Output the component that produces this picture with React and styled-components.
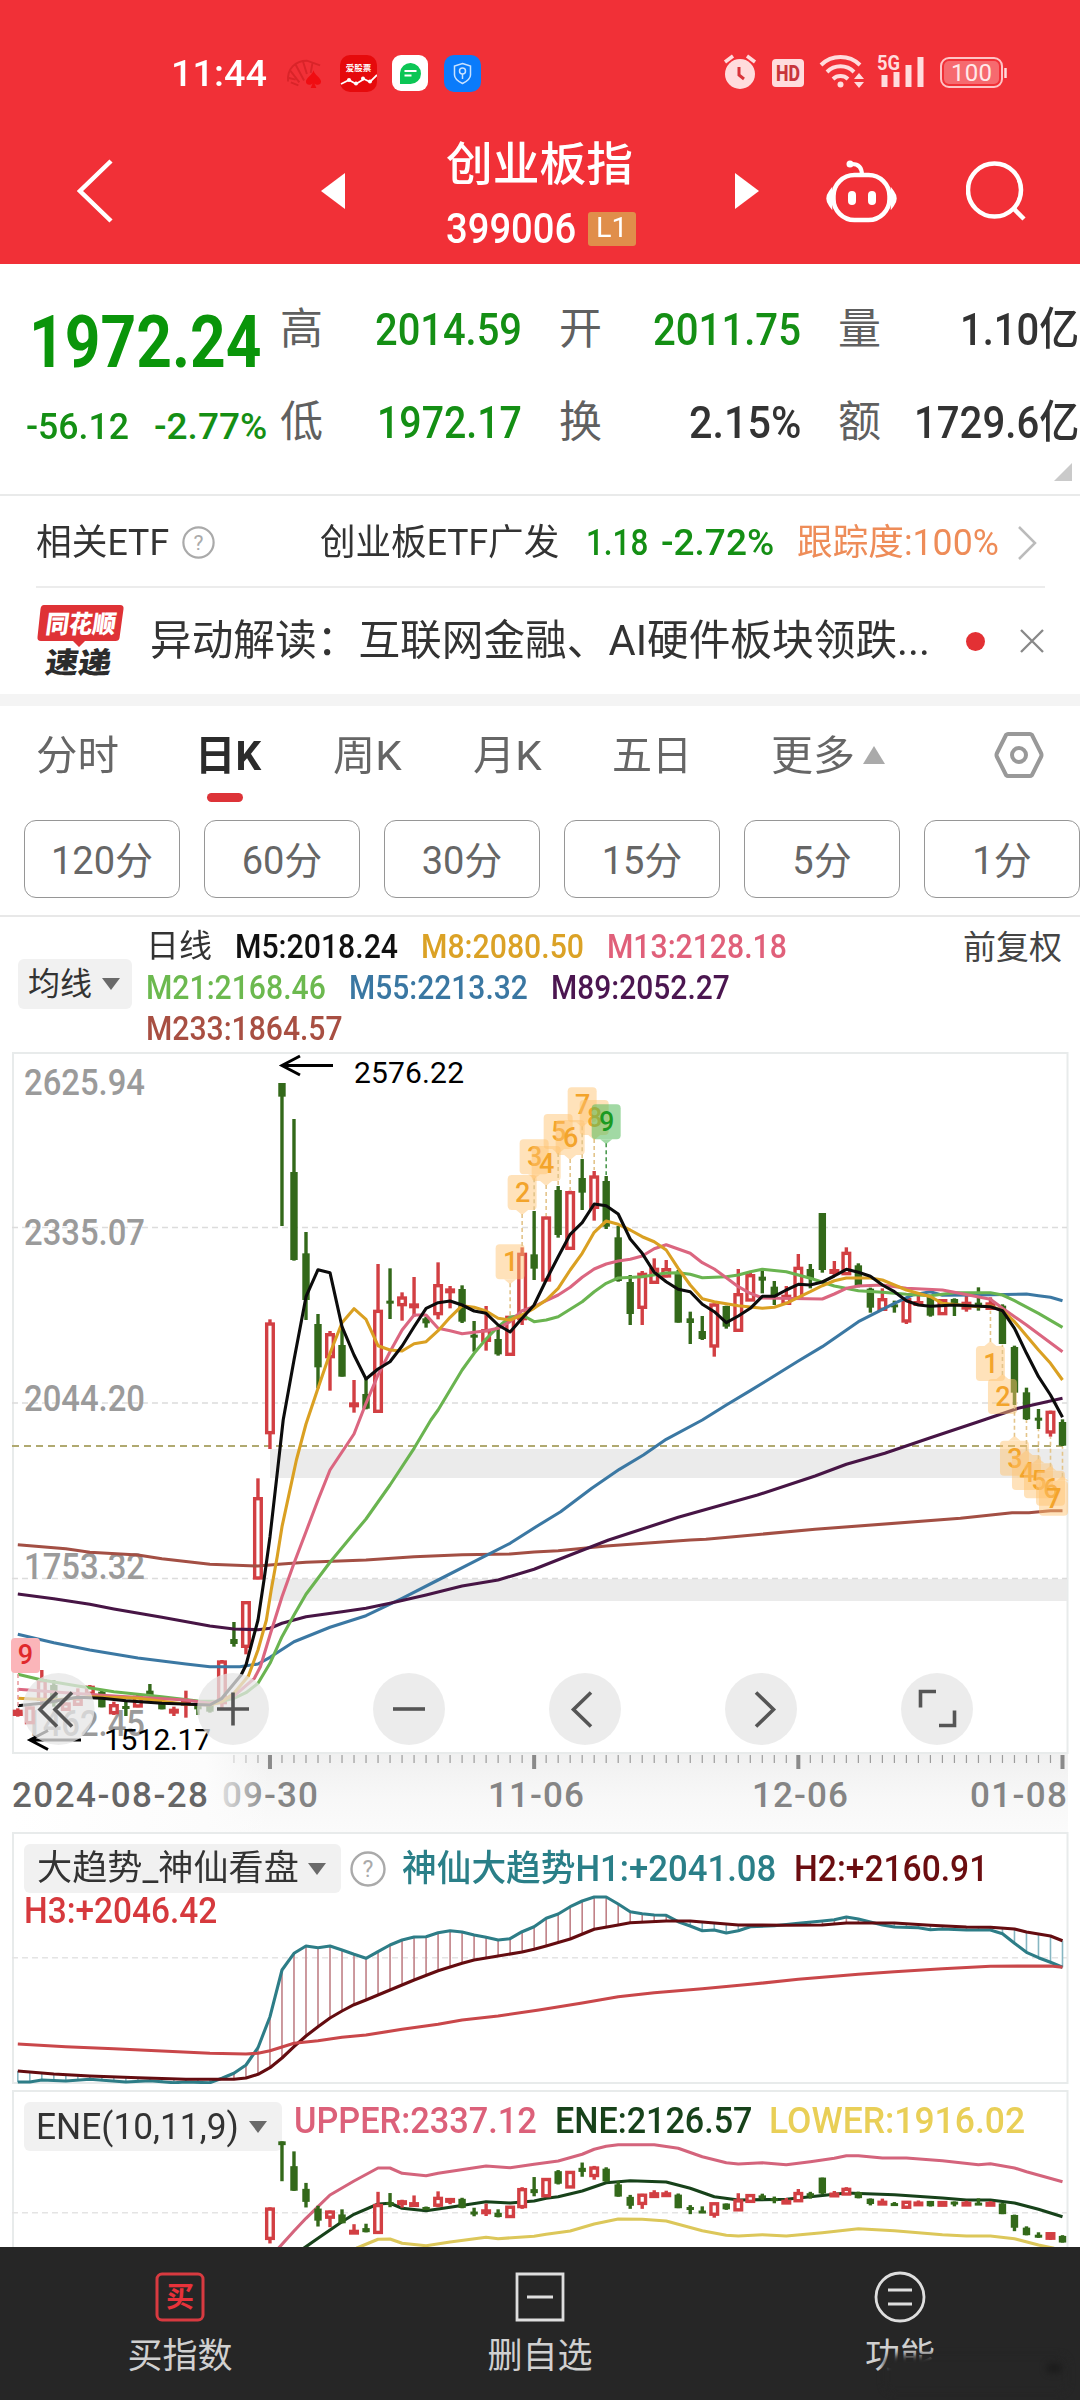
import React, { useLayoutEffect, useRef, useState } from "react";
import styled, { createGlobalStyle } from "styled-components";

const GlobalStyle = createGlobalStyle`
  * {
    box-sizing: border-box;
  }
  body {
    margin: 0;
    background: #fff;
    font-family: Roboto, "Noto Sans CJK SC", sans-serif;
    line-height: 1;
    color: #333;
  }
  svg {
    display: block;
    flex: none;
    font-family: Roboto, "Noto Sans CJK SC", sans-serif;
  }
`;

/* ---------- fitted text ---------- */

const FitOuter = styled.span`
  display: inline-block;
  flex: none;
  width: ${({ $w }) => $w}px;
  font-size: ${({ $size }) => $size}px;
  font-weight: ${({ $weight }) => $weight};
  color: ${({ $color }) => $color};
  white-space: nowrap;
  line-height: 1;
`;
const FitInner = styled.span`
  display: inline-block;
  transform-origin: left center;
`;

// squeezes the text to an exact width, like the condensed DIN digits do
function Fit({ w, size, weight = 400, color = "inherit", children }) {
  const ref = useRef(null);
  const [scale, setScale] = useState(1);
  useLayoutEffect(() => {
    if (ref.current) setScale(w / ref.current.offsetWidth);
  }, [w, size, children]);
  return (
    <FitOuter $w={w} $size={size} $weight={weight} $color={color}>
      <FitInner ref={ref} style={{ transform: `scaleX(${scale})` }}>
        {children}
      </FitInner>
    </FitOuter>
  );
}

/* ---------- layout ---------- */

const Page = styled.div`
  width: 1080px;
  height: 2400px;
  overflow: hidden;
  display: flex;
  flex-direction: column;
  background: #fff;
`;
const Header = styled.header`
  height: 264px;
  background: #f13037;
  color: #fff;
`;
const StatusBar = styled.div`
  height: 118px;
  padding: 28px 72px 0 171px;
  display: flex;
  align-items: center;
  justify-content: space-between;
`;
const StatusGroup = styled.div`
  display: flex;
  align-items: center;
`;
const AppIcons = styled.div`
  display: flex;
  align-items: center;
  gap: 15.5px;
  margin-left: 19px;
`;
const TitleBar = styled.div`
  height: 146px;
  display: grid;
  grid-template-columns: 321px 125px 289px 91px 140px 114px;
  align-items: center;
  justify-items: start;
  > svg:first-child {
    margin-left: 77px;
  }
`;
const TitleBlock = styled.div`
  padding-top: 8px;
  display: flex;
  flex-direction: column;
  gap: 21px;
`;
const CodeLine = styled.div`
  display: flex;
  align-items: center;
  gap: 12px;
`;
const LevelBadge = styled.span`
  width: 48px;
  height: 34px;
  border-radius: 3px;
  background: #e08e4b;
  display: flex;
  justify-content: center;
  align-items: center;
`;

const Quote = styled.section`
  height: 232px;
  border-bottom: 2px solid #e9eaea;
  display: grid;
  grid-template-columns: 280px 1fr;
`;
const PriceBlock = styled.div`
  padding: 42px 0 0 24px;
  display: flex;
  flex-direction: column;
  gap: 29px;
  > span {
    margin-left: 5px;
  }
`;
const Changes = styled.div`
  display: flex;
  gap: 25px;
  margin-left: 2px;
`;
const Stats = styled.div`
  position: relative;
  padding-top: 19px;
  display: grid;
  grid-template-columns: 242px 242px 241px;
  grid-auto-rows: 93px;
  column-gap: 37px;
`;
const Stat = styled.div`
  display: flex;
  align-items: center;
  justify-content: space-between;
  font-size: 43px;
  color: #606060;
`;
const Corner = styled.i`
  position: absolute;
  right: 8px;
  bottom: 13px;
  border-left: 18px solid transparent;
  border-bottom: 18px solid #cacaca;
`;

const EtfRow = styled.div`
  margin: 0 35px 0 36px;
  height: 92px;
  padding-top: 3px;
  border-bottom: 2px solid #ececec;
  display: flex;
  align-items: center;
`;
const Spacer = styled.span`
  flex: none;
  width: ${({ $w }) => $w}px;
`;
const NewsRow = styled.div`
  height: 106px;
  padding: 0 36px;
  display: flex;
  align-items: center;
`;
const Dot = styled.span`
  flex: none;
  width: 19px;
  height: 19px;
  border-radius: 50%;
  background: #e33034;
  margin: 0 35px 0 36px;
`;
const Band = styled.div`
  height: 12px;
  background: #f4f4f4;
`;
const Tabs = styled.nav`
  height: 114px;
  padding: 24px 36px 0;
  display: flex;
  align-items: flex-start;
`;
const Tab = styled.div`
  height: 74px;
  width: ${({ $w }) => $w}px;
  display: flex;
  flex-direction: column;
  color: ${({ $active }) => ($active ? "#2b2b2b" : "#666")};
  padding-top: 6px;
  &::after {
    content: "";
    width: 36px;
    height: 9px;
    border-radius: 5px;
    margin: 16px 0 0 12px;
    background: ${({ $active }) => ($active ? "#dd3338" : "transparent")};
  }
`;
const MoreArrow = styled.i`
  margin: 16px 109px 0 8px;
  border: 11px solid transparent;
  border-top: 0;
  border-bottom: 18px solid #aaa;
`;
const Periods = styled.div`
  height: 97px;
  padding-left: 24px;
  display: flex;
  gap: 24px;
  border-bottom: 2px solid #e8e8e8;
`;
const Period = styled.button`
  flex: none;
  width: 156px;
  height: 78px;
  padding: 0 0 3px;
  border: 1.5px solid #969696;
  border-radius: 12px;
  background: #fff;
  color: #666;
  font: 400 38px Roboto, "Noto Sans CJK SC", sans-serif;
`;

const Legend = styled.div`
  height: 135px;
  display: grid;
  grid-template-columns: 129px 834px 1fr;
`;
const Picker = styled.button`
  display: flex;
  align-items: center;
  gap: 10px;
  border: 0;
  padding: 0 0 0 ${({ $pad }) => $pad}px;
  width: ${({ $w }) => $w}px;
  height: ${({ $h }) => $h}px;
  margin: ${({ $m }) => $m};
  border-radius: 6px;
  background: #f1f1f1;
  color: #333;
  font-family: inherit;
  &::after {
    content: "";
    border: 9px solid transparent;
    border-bottom: 0;
    border-top: 12px solid #6a6a6a;
  }
`;
const LegendLines = styled.div`
  padding: 13px 0 0 17px;
  display: flex;
  flex-direction: column;
  gap: 7px;
`;
const LegendLine = styled.div`
  display: flex;
  gap: 23px;
  height: 34px;
`;
const Adjust = styled.div`
  padding-top: 14px;
`;

// chart and its header share one grid cell
const Panel = styled.section`
  flex: none;
  display: grid;
  height: ${({ $h }) => $h}px;
  margin-bottom: ${({ $gap }) => $gap || 0}px;
  > * {
    grid-area: 1 / 1;
  }
`;
const PlotSvg = styled.svg`
  overflow: visible;
`;
const PanelHead = styled.div`
  display: flex;
  flex-wrap: wrap;
  align-content: flex-start;
  align-items: center;
  padding-top: ${({ $top }) => $top || 0}px;
`;
const BottomNav = styled.nav`
  position: relative;
  height: 153px;
  background: #262626;
  display: grid;
  grid-template-columns: repeat(3, 360px);
`;
const NavItem = styled.div`
  display: flex;
  flex-direction: column;
  align-items: center;
  padding: 24px 0 0;
  gap: 16px;
  font-size: 35px;
  color: #d0d0d0;
`;
const Smudge = styled.div`
  position: absolute;
  left: ${({ $x }) => $x}px;
  top: ${({ $y }) => $y}px;
  width: ${({ $w }) => $w}px;
  height: ${({ $h }) => $h}px;
  background: ${({ $c }) => $c || "#262626"};
  border-radius: 10px;
  filter: blur(3px);
`;

/* ---------- chart data ---------- */

// x of bar i; y values are kept in thirds of a pixel below each chart's base
const X = (i) => 17.8 + 12.008 * i;

// [up, high, top, bottom, low]
const CANDLES = [
  [1, 2005, 2012, 2025, 2030], [1, 2000, 2002, 2050, 2050], [1, 1890, 1920, 1980, 2005],
  [0, 1920, 1935, 1990, 2000], [1, 1988, 1990, 2010, 2010], [1, 1945, 1975, 1995, 1997],
  [1, 1935, 1940, 1962, 1965], [0, 1953, 1955, 2002, 2002], [1, 1985, 1995, 2020, 2025],
  [0, 1985, 1998, 2006, 2028], [1, 1960, 1970, 2000, 2002], [0, 1932, 1952, 1965, 1968],
  [0, 1990, 1990, 2008, 2008], [1, 2000, 2009, 2017, 2028], [1, 1952, 1985, 1992, 2033],
  [0, 1995, 1995, 2008, 2025], [0, 1993, 1995, 2015, 2018], [1, 1860, 1864, 1990, 2005],
  [0, 1746, 1797, 1812, 1820], [1, 1684, 1686, 1821, 1843], [1, 1315, 1374, 1616, 1618],
  [1, 838, 850, 1180, 1227], [0, 129, 129, 170, 558], [0, 237, 396, 660, 662],
  [0, 576, 640, 780, 840], [0, 822, 852, 982, 1045], [1, 873, 882, 952, 1052],
  [0, 860, 915, 1010, 1010], [1, 1020, 1090, 1098, 1118], [0, 1015, 1062, 1106, 1108],
  [1, 672, 812, 1116, 1118], [0, 685, 782, 790, 837], [1, 757, 772, 796, 842],
  [1, 711, 793, 801, 830], [0, 830, 835, 850, 863], [1, 667, 735, 823, 838],
  [1, 738, 748, 756, 805], [0, 736, 747, 845, 849], [0, 843, 884, 892, 935],
  [1, 798, 870, 903, 932], [0, 860, 897, 943, 947], [1, 828, 830, 945, 946],
  [1, 622, 641, 838, 855], [0, 513, 643, 686, 720], [1, 530, 532, 722, 723],
  [0, 438, 450, 585, 593], [1, 452, 456, 627, 628], [0, 357, 414, 458, 510],
  [1, 393, 409, 504, 542], [0, 408, 423, 560, 567], [0, 558, 592, 723, 725],
  [0, 705, 726, 822, 855], [1, 693, 701, 804, 855], [1, 655, 686, 729, 731],
  [1, 660, 687, 710, 712], [0, 690, 702, 848, 848], [0, 815, 835, 849, 912],
  [0, 828, 873, 897, 900], [1, 790, 793, 920, 950], [0, 797, 798, 860, 866],
  [1, 687, 762, 873, 875], [1, 697, 705, 782, 783], [0, 692, 710, 722, 760],
  [0, 723, 740, 770, 795], [1, 738, 767, 792, 795], [1, 642, 683, 775, 777],
  [0, 672, 687, 715, 745], [0, 519, 519, 690, 698], [1, 663, 690, 698, 706],
  [1, 622, 638, 703, 705], [0, 670, 676, 740, 742], [0, 743, 746, 803, 818],
  [1, 745, 777, 810, 812], [0, 782, 793, 801, 818], [1, 775, 777, 845, 852],
  [1, 765, 786, 795, 797], [0, 770, 770, 827, 830], [1, 778, 780, 823, 825],
  [0, 775, 777, 795, 828], [1, 768, 788, 806, 815], [0, 742, 788, 796, 812],
  [1, 772, 790, 807, 810], [0, 793, 797, 912, 912], [0, 917, 921, 1058, 1095],
  [0, 1043, 1057, 1138, 1140], [0, 1107, 1133, 1142, 1167], [1, 1112, 1115, 1178, 1190],
  [0, 1138, 1146, 1217, 1218],
];

const MA_LINES = [
  ["#a34f44", [0,1514,4,1526,6,1537,10,1545,12,1556,16,1573,20,1578,22,1572,24,1567,29,1560,33,1550,37,1544,41,1542,43,1536,45,1532,49,1518,56,1500,57.3,1498,66.4,1468,78.5,1435,82.8,1418,84.2,1418,86,1412,87,1412]],
  ["#3b78a3", [0,1783,3,1808,6,1830,10,1854,14,1872,16,1880,18.5,1880,20,1872,21,1852,23,1805,26,1762,29,1727,32,1675,35,1620,38,1565,41,1510,43.4,1455,45.2,1415,47.8,1345,50.1,1288,52.1,1245,54,1198,57,1140,59,1095,61,1052,65,963,67,920,70,845,73,790,74.5,765,76,755,77,766,80,765,84,762,85,767,86,772,87,782]],
  ["#471545", [0,1662,3,1676,6,1693,8,1707,12,1732,16,1758,18,1767,20,1769,21,1765,22,1750,24,1730,27,1715,29,1705,31,1690,34,1665,37,1638,40,1620,43,1588,46,1545,49.2,1500,55,1432,57.8,1403,61.6,1365,66.4,1308,69,1273,72.2,1240,76,1193,80,1145,83.3,1105,87,1075]],
  ["#6ab450", [0,1903,2,1920,5,1938,8,1955,12,1970,15,1983,17,1984,18,1975,19,1958,20,1930,21,1870,22,1790,23,1725,24,1663,26,1567,28,1480,29,1437,31,1335,33,1225,34.4,1140,35,1110,36,1050,37,990,38,940,39,897,40,860,41,832,42,825,43,845,44,840,45,830,46,808,47,785,48,755,49,730,50,714,52,710,54,699,55,698,56,703,57,713,59,710,60,705,61,695,62,688,64,695,65,705,66,715,68,738,70,752,72,757,74,763,76,767,78,758,81,758,82,765,83,782,85,820,87,862]],
  ["#db6680", [0,1948,4,1958,8,1968,14,1980,16,1990,18,1968,19.7,1915,20.2,1880,21,1785,22,1670,23,1570,24,1475,25,1380,26,1290,28,1182,29,1090,30,1005,31,935,32,870,33,825,34,825,35,865,36,872,37,881,39,872,40,865,41,845,42,812,43,800,44,782,45,765,46,742,47,712,48,687,49,672,50,663,51,658,52,648,53,626,54,614,55,627,56,640,57,668,58,687,59,713,60,740,61,760,62,774,67,777,68,762,69,745,70,738,72,735,74,745,77,750,78,757,81,778,82,805,84,855,87,935]],
  ["#daa022", [0,1975,3,1980,6,1970,10,1975,14,1993,16,1995,17,1985,18,1960,19.2,1908,20,1830,20.7,1740,21.1,1650,21.6,1550,22,1460,22.6,1360,23.2,1260,24,1152,25,1045,26,940,27,848,28,806,29,838,30,917,31,930,32,933,33,911,34,905,35,872,36,832,37,797,38,802,39,813,40,835,41,840,42,825,43,805,44,780,45,745,46,690,47,640,48,577,49,543,50,553,51,570,52,590,53,605,54,630,55,685,56,735,57,776,58,785,60,797,62,805,63,802,64,790,65,772,66,755,67,737,68,722,69,714,71,714,72,720,74,750,76,770,77,790,80,800,81,798,82,812,83,845,85,930,86,970,87,1020]],
  ["#0c0c0c", [0,1997,2,1990,5,1972,7,1975,9,1982,12,1990,16,1995,17,1975,18.6,1905,19,1875,20,1740,20.5,1620,21,1490,21.6,1300,22.1,1140,23,960,24,770,25,689,26,698,27,860,28,945,29,1017,30,987,31,965,32,918,33,860,34,805,35,788,36,783,37,795,38,813,39,820,40,855,41,876,42,835,43,795,44,720,45,650,46,583,47,548,48,492,49,497,50,522,51,597,52,640,53,697,54,725,55,748,56,755,57,793,58,815,59,848,60,828,61,805,62,769,63,769,64,750,65,733,66,735,67,726,68,708,69,688,70,697,71,709,72,735,73,755,74,782,75,795,76,799,78,795,81,800,82,812,83,865,84,940,85,1010,86,1065,87,1132]],
];

const H1 = [0,786,1,786,2,780,4,783,6,778,9,786,11,782,13,788,14,786,16,788,17,775,18,760,19,735,20,683,21,590,22,450,23,400,24,378,25,383,26,378,27,390,28,403,29,415,30,395,31,375,32,360,33,351,34,350,35,338,36,332,37,336,38,345,39,352,40,360,41,356,42,335,43,320,44,295,45,282,46,260,47,243,48,231,49,231,50,252,51,275,52,281,53,285,54,286,55,305,56,318,57,332,58,330,59,339,60,332,61,320,63,317,65,310,67,303,68,299,69,291,70,297,71,306,72,315,73,321,75,323,76,329,77,327,79,330,81,330,82,341,83,370,84,397,85,413,86,427,87,442];
const H2 = [0,753,3,762,6,768,10,773,14,778,18,778,19,774,20,763,21,743,22,714,23,680,24,648,25,620,26,594,27,573,28,554,29,540,31,510,33,480,35,452,37,430,38,420,40,408,42,396,43,388,44,378,46,357,48,328,50,315,51,308,54,303,56,303,58,309,60,315,64,316,67,315,69,309,73,309,76,316,79,321,81,322,83,327,84,336,86,348,87,362];
const H3 = [0,672,4,680,8,686,12,693,16,700,19,702,20,700,21,692,23,670,25,662,27,652,29,645,32,628,35,613,37,600,40,588,43.4,570,47,549,50,530,53,518,57,506,61,493,65,478,70,463,73,455,77,446,81,439,86,438,87,442];
const UPPER = [21.7,1285,23,1233,24,1195,25,1160,26,1125,28,1083,30,1044,31,1044,32,1060,34,1067,35,1060,39,1038,41,1043,43,1033,45,1023,47,1003,48,988,49,979,50,974,53,974,55,985,57,1010,59,1028,60,1032,62,1028,64,1034,66,1025,68,1015,69,1007,70,1007,72,1014,74,1014,77,1022,80,1034,81,1031,83,1044,84,1055,87,1085];
const ENE = [23.8,1285,25,1255,27,1205,28,1183,30,1152,31,1150,32,1165,34,1172,36,1162,39,1145,41,1149,43,1143,44,1135,45,1130,47,1113,49,1088,51,1082,54,1086,56,1105,58,1130,60,1140,64,1138,66,1130,69,1119,73,1124,77,1134,79,1140,81,1140,83,1149,85,1168,87,1190];
const LOWER = [28.2,1285,30,1258,31,1257,32,1270,34,1277,36,1266,39,1252,40,1256,43,1249,44,1243,46,1233,48,1212,50,1197,52,1198,54,1203,57,1232,59,1246,60,1248,62,1244,64,1248,67,1238,70,1226,73,1232,77,1244,79,1248,81,1248,83,1256,85,1275,86.3,1285];

const TOP_TAGS = [
  [41, 613, 825], [42, 405, 620], [43, 298, 510], [44, 318, 528], [45, 222, 436],
  [46, 240, 450], [47, 142, 355], [48, 180, 390], [49, 193, 405],
];
const LOW_TAGS = [
  [81, 918, 812], [82, 1017, 914], [83, 1202, 1096], [84, 1245, 1141],
  [85, 1270, 1168], [86, 1292, 1192], [87, 1322, 1220],
];

const toPoints = (flat, base) => {
  const out = [];
  for (let k = 0; k < flat.length; k += 2) {
    out.push(`${X(flat[k]).toFixed(1)},${(base + flat[k + 1] / 3).toFixed(1)}`);
  }
  return out.join(" ");
};

const valueAt = (flat, i) => {
  for (let k = 2; k < flat.length; k += 2) {
    if (flat[k] >= i) {
      const t = (i - flat[k - 2]) / (flat[k] - flat[k - 2]);
      return flat[k - 1] + t * (flat[k + 1] - flat[k - 1]);
    }
  }
  return flat[flat.length - 1];
};

function Line({ data, base, color, width = 3.1 }) {
  return (
    <polyline
      points={toPoints(data, base)}
      fill="none"
      stroke={color}
      strokeWidth={width}
      strokeLinejoin="round"
    />
  );
}

function Candles({ from = 0, y }) {
  return CANDLES.slice(from).map(([up, h, t, b, l], k) => {
    const x = X(from + k);
    const top = y(t);
    const bodyH = Math.max(y(b) - top, 3);
    if (!up) {
      return (
        <g key={k} fill="#33691a">
          <rect x={x - 1.7} y={y(h)} width={3.4} height={y(l) - y(h)} />
          <rect x={x - 3.7} y={top} width={7.4} height={bodyH} />
        </g>
      );
    }
    return (
      <g key={k} fill="#d23f43">
        <rect x={x - 1.7} y={y(h)} width={3.4} height={Math.max(top - y(h), 0)} />
        <rect x={x - 1.7} y={top + bodyH} width={3.4} height={Math.max(y(l) - top - bodyH, 0)} />
        <rect x={x - 5} y={top - 1} width={10} height={bodyH + 2} />
        {bodyH > 6 && <rect x={x - 1.6} y={top + 2.4} width={3.2} height={bodyH - 4.8} fill="#fff" />}
      </g>
    );
  });
}

function Tag({ i, top, end, n, low, green }) {
  const x = X(i);
  // the last tag is kept inside the frame
  const cx = Math.min(x, 1053.5);
  const y = 1040 + top / 3;
  const color = green ? "#1b9a22" : "#f3a42b";
  const tip = low ? y - 4 : y + 39;
  return (
    <g>
      <line x1={x} x2={x} y1={tip} y2={1040 + end / 3} stroke={green ? "#4d9a50" : "#e3c48a"} strokeWidth="1.6" strokeDasharray="4 3" />
      <g fill={green ? "#55bb5b" : "#ffc370"} opacity={green ? 0.55 : 0.48}>
        <rect x={cx - 14.5} y={y} width="29" height="35" rx="4" />
        <path d={low ? `M${x - 6} ${y}l6-5 6 5z` : `M${x - 6} ${y + 35}l6 5 6-5z`} />
      </g>
      <text x={cx + 0.5} y={y + 27} textAnchor="middle" fontSize="27" fontWeight="500" fill={color}>
        {n}
      </text>
    </g>
  );
}

const ROUND_BUTTONS = [
  [58.5, "M-1.5-16.5l-17 17 17 17M13.5-16.5l-17 17 17 17"],
  [233, "M-16 0h32M0-16.500v33"],
  [409, "M-16 0h32"],
  [585, "M6-16.500l-17.500 17 17.500 17"],
  [761, "M-5-16.500l17.500 17-17.500 17"],
  [937, "M-1-17.500h-15.500v16M2 16.500h15.500v-15"],
];

const AXIS = [["2625.94", 1095], ["2335.07", 1245], ["2044.20", 1411], ["1753.32", 1579], ["1462.45", 1736]];

function MainChart() {
  const y = (v) => 1040 + v / 3;
  return (
    <Panel $h={702}>
      <PlotSvg width="1080" height="702" viewBox="0 1052 1080 702">
        <rect x="13" y="1053" width="1054.500" height="700" fill="none" stroke="#e8ebeb" strokeWidth="2" />
        <rect x="270" y="1449" width="797" height="29" fill="#ebebeb" />
        <rect x="270" y="1579" width="797" height="22" fill="#ebebeb" />
        {[1227.5, 1403, 1578.5].map((g) => (
          <line key={g} x1="12" x2="1067" y1={g} y2={g} stroke="#dcdcdc" strokeWidth="1.300" strokeDasharray="6 4" />
        ))}
        <line x1="12" x2="1067" y1="1446" y2="1446" stroke="#b0a970" strokeWidth="2" strokeDasharray="7 5" />
        {AXIS.map(([t, b]) => (
          <text key={t} x="24" y={b} fontSize="36" fontWeight="500" fill="#9b9b9b" textLength="121" lengthAdjust="spacingAndGlyphs">
            {t}
          </text>
        ))}
        <Candles y={y} />
        {MA_LINES.map(([c, d]) => (
          <Line key={c} data={d} base={1040} color={c} />
        ))}
        {TOP_TAGS.map(([i, top, end], k) => (
          <Tag key={i} i={i} top={top} end={end} n={k + 1} green={k === 8} />
        ))}
        {LOW_TAGS.map(([i, top, end], k) => (
          <Tag key={i} i={i} top={top} end={end} n={k + 1} low />
        ))}
        <rect x="11" y="1638" width="29" height="35" rx="4" fill="#fbb5b9" />
        <text x="25.500" y="1664" textAnchor="middle" fontSize="27" fontWeight="500" fill="#e0282c">9</text>
        <line x1="18" x2="18" y1="1674" y2="1706" stroke="#eaa0a4" strokeWidth="1.600" strokeDasharray="4 3" />
        <g stroke="#000" strokeWidth="3" fill="none">
          <path d="M283 1065.500H333M300 1056l-18 9.500 18 9.500" />
          <path d="M31 1740H81M48 1730.500l-18 9.500 18 9.500" />
        </g>
        <text x="354" y="1083" fontSize="30" textLength="110" fill="#000">2576.22</text>
        <text x="104" y="1750" fontSize="30" textLength="107" fill="#000">1512.17</text>
        {ROUND_BUTTONS.map(([cx, d]) => (
          <g key={cx} transform={`translate(${cx} 1709)`}>
            <circle r="36" fill="#e6e6e6" opacity="0.75" />
            <path d={d} fill="none" stroke="#555" strokeWidth="3.600" />
          </g>
        ))}
      </PlotSvg>
    </Panel>
  );
}

function DateAxis() {
  const dates = [["09-30", 222, 96], ["11-06", 488, 96], ["12-06", 752, 96], ["01-08", 970, 97]];
  return (
    <Panel $h={78}>
      <svg width="1080" height="78" viewBox="0 1754 1080 78">
        <defs>
          <linearGradient id="axisDown" x1="0" x2="0" y1="0" y2="1">
            <stop offset="0" stopColor="#f0f0f0" />
            <stop offset="0.600" stopColor="#f8f8f8" />
            <stop offset="1" stopColor="#fbfbfb" />
          </linearGradient>
          <linearGradient id="axisFade" x1="0" x2="1" y1="0" y2="0">
            <stop offset="0" stopColor="#fff" />
            <stop offset="0.750" stopColor="#fcfcfc" />
            <stop offset="1" stopColor="#fcfcfc" stopOpacity="0" />
          </linearGradient>
        </defs>
        <rect x="12" y="1754" width="1056" height="78" fill="url(#axisDown)" />
        {Array.from({ length: 70 }, (_, k) => k + 18).map((i) => {
          const major = (i - 21) % 22 === 0;
          return (
            <rect key={i} x={X(i) - (major ? 2 : 0.6)} y="1755" width={major ? 4 : 1.2} height={major ? 14 : 8} fill={major ? "#8a8a8a" : "#9c9c9c"} />
          );
        })}
        {dates.map(([t, x, w]) => (
          <text key={t} x={x} y="1807" fontSize="35" fontWeight="500" fill="#858585" textLength={w}>
            {t}
          </text>
        ))}
        <rect x="12" y="1754" width="258" height="78" fill="url(#axisFade)" />
        <text x="12" y="1807" fontSize="35" fontWeight="500" fill="#666" textLength="196">2024-08-28</text>
      </svg>
    </Panel>
  );
}

function Help({ size, color = "#aaa" }) {
  return (
    <svg width={size} height={size} viewBox="0 0 36 36">
      <circle cx="18" cy="18" r="16.500" fill="none" stroke={color} strokeWidth="2.400" />
      <text x="18" y="26" textAnchor="middle" fontSize="23" fill={color}>?</text>
    </svg>
  );
}

function TrendPanel() {
  return (
    <Panel $h={252} $gap={6}>
      <svg width="1080" height="252" viewBox="0 1832 1080 252">
        <rect x="13" y="1833" width="1054.500" height="250" fill="#fff" stroke="#e8ebeb" strokeWidth="2" />
        <line x1="12" x2="1067" y1="1957.700" y2="1957.700" stroke="#e4e4e4" strokeWidth="1.500" strokeDasharray="6 4" />
        {CANDLES.map((_, i) => {
          const a = valueAt(H1, i);
          const b = valueAt(H2, i);
          return (
            <line key={i} x1={X(i)} x2={X(i)} y1={1820 + a / 3} y2={1820 + b / 3} stroke={a < b ? "#c08086" : "#86b6c2"} strokeWidth="1.600" />
          );
        })}
        <Line data={H1} base={1820} color="#2d7d87" />
        <Line data={H2} base={1820} color="#640c10" />
        <Line data={H3} base={1820} color="#c9474a" />
      </svg>
      <PanelHead $top={12}>
        <Picker $w={317} $h={49} $pad={12} $m="0 9px 0 24px">
          <Fit w={262} size={35}>大趋势_神仙看盘</Fit>
        </Picker>
        <Help size={36} />
        <Spacer $w={16} />
        <Fit w={374} size={36} weight={500} color="#2a7f88">神仙大趋势H1:+2041.08</Fit>
        <Spacer $w={18} />
        <Fit w={194} size={36} weight={500} color="#6b0d10">H2:+2160.91</Fit>
        <Spacer $w={80} />
        <Spacer $w={24} />
        <Fit w={193} size={36} weight={500} color="#d6393d">H3:+2046.42</Fit>
      </PanelHead>
    </Panel>
  );
}

function EnePanel() {
  return (
    <Panel $h={157}>
      <PanelHead>
        <Picker $w={258} $h={49} $pad={12} $m="12px 12px 0 24px">
          <Fit w={203} size={36}>ENE(10,11,9)</Fit>
        </Picker>
        <Fit w={243} size={36} weight={500} color="#dc617a">UPPER:2337.12</Fit>
        <Spacer $w={18} />
        <Fit w={197} size={36} weight={500} color="#17421a">ENE:2126.57</Fit>
        <Spacer $w={17} />
        <Fit w={256} size={36} weight={500} color="#e9cf57">LOWER:1916.02</Fit>
      </PanelHead>
      <svg width="1080" height="157" viewBox="0 2090 1080 157">
        <path d="M13 2250V2091H1067.500V2250" fill="none" stroke="#e8ebeb" strokeWidth="2" />
        <line x1="12" x2="1067" y1="2212.700" y2="2212.700" stroke="#e4e4e4" strokeWidth="1.500" strokeDasharray="6 4" />
        <Line data={UPPER} base={1820} color="#d4647c" />
        <Line data={ENE} base={1820} color="#17421a" />
        <Line data={LOWER} base={1820} color="#dcc75a" />
        <Candles from={21} y={(v) => 1820 + (928 + 0.279 * v) / 3} />
      </svg>
    </Panel>
  );
}

/* ---------- icons ---------- */

function CardsIcon() {
  return (
    <svg width="38" height="34" viewBox="0 0 38 36" fill="none">
      <path d="M1 27C0 13 9 5 21 5l14 5M4 28l8 3M3 15l10 13M9 9l9 17M17 6l4 13M27 7l-2 11M1 23l8 2" stroke="#d92429" strokeWidth="2" />
      <path d="M28 15c1 5 8 8 8 12 0 4-5 4-7 2l2 5h-6l2-5c-2 2-7 2-7-2 0-4 7-7 8-12z" fill="#f00d12" />
    </svg>
  );
}
function StockAppIcon() {
  return (
    <svg width="37" height="37" viewBox="0 0 37 37">
      <rect width="37" height="37" rx="10" fill="#e60a0c" />
      <text x="18.500" y="15.500" fontSize="8.500" fontWeight="700" fill="#fff" textAnchor="middle">爱股票</text>
      <path d="M1 29l8-4 7 4 8-5 6 3 7-7" fill="none" stroke="#fff" strokeWidth="1.800" />
      <g fill="#fff"><circle cx="9" cy="25" r="2" /><circle cx="16" cy="28.500" r="2" /><circle cx="23" cy="23.500" r="2" /><circle cx="30" cy="26.500" r="2" /></g>
    </svg>
  );
}
function ChatIcon() {
  return (
    <svg width="36" height="36" viewBox="0 0 36 36">
      <rect width="36" height="36" rx="9" fill="#fff" />
      <path d="M8 29V18a10.500 10.500 0 1 1 10.500 11z" fill="#0bc655" />
      <path d="M12.500 16h12M12.500 20.500h7" stroke="#fff" strokeWidth="2" />
    </svg>
  );
}
function ShieldIcon() {
  return (
    <svg width="37" height="37" viewBox="0 0 37 37" fill="none">
      <rect width="37" height="37" rx="10" fill="#0a7bfb" />
      <path d="M18.500 8.500l8 2.500v9c0 4-4 6.500-8 8.500-4-2-8-4.500-8-8.500v-9z" stroke="#c9e2ff" strokeWidth="1.500" />
      <circle cx="18.500" cy="16" r="3" stroke="#c9e2ff" strokeWidth="1.500" />
      <path d="M18.500 19v5" stroke="#c9e2ff" strokeWidth="1.500" />
    </svg>
  );
}
function StatusIcons() {
  const c = "#ffdcdd";
  return (
    <svg width="285" height="46" viewBox="723 50 285 46" fill="none">
      <circle cx="740" cy="74" r="15" fill={c} />
      <path d="M725 62l8-6M755 62l-8-6" stroke={c} strokeWidth="3.500" />
      <path d="M739 67v8l5 4" stroke="#d8343a" strokeWidth="3" />
      <rect x="772" y="59" width="32" height="28" rx="4" fill={c} />
      <text x="788" y="81" fontSize="22" fontWeight="800" textAnchor="middle" fill="#c8353b" textLength="24" lengthAdjust="spacingAndGlyphs">HD</text>
      <g stroke={c} strokeWidth="4">
        <path d="M821 65a28 28 0 0 1 39 0" />
        <path d="M827 72a19 19 0 0 1 27 0" />
        <path d="M833 79a11 11 0 0 1 15 0" />
      </g>
      <circle cx="840.500" cy="84.500" r="3" fill={c} />
      <path d="M854 79h10l-5-6zM854 82h10l-5 6z" fill={c} />
      <text x="877" y="70" fontSize="20" fontWeight="700" fill={c} textLength="23" lengthAdjust="spacingAndGlyphs">5G</text>
      <path d="M884.500 87V75M896.500 87V72M908.500 87V65M920.500 87V57" stroke={c} strokeWidth="6" />
      <rect x="941" y="58" width="61" height="29" rx="8" stroke="#ffc4c6" strokeWidth="2" />
      <rect x="944" y="61" width="55" height="23" rx="5" fill="#f66a6f" />
      <path d="M1005.500 68v10" stroke={c} strokeWidth="2.500" />
      <text x="971.500" y="81" fontSize="24" textAnchor="middle" fill="#ffe9e9" textLength="41">100</text>
    </svg>
  );
}
function RobotIcon() {
  return (
    <svg width="72" height="66" viewBox="0 0 72 66" fill="none" stroke="#fff">
      <rect x="7.500" y="17" width="56" height="45" rx="21" strokeWidth="4.500" />
      <path d="M36 17c0-8-4-11-10-11" strokeWidth="4" />
      <circle cx="24" cy="6" r="3.500" fill="#fff" stroke="none" />
      <path d="M4.500 34c-3 4-3 9 0 13zM66.500 34c3 4 3 9 0 13z" strokeWidth="3.500" fill="#fff" />
      <path d="M26 37v6M46 37v6" strokeWidth="8" strokeLinecap="round" />
    </svg>
  );
}

function BrandLogo() {
  return (
    <PlotSvg width="90" height="76" viewBox="0 0 90 76">
      <path d="M8 2h76q4 0 3.500 4l-4 29q-.5 3-4 3H49l-6 6-6-6H5q-4 0-3.500-4l3-28q.5-4 3.500-4z" fill="#df3236" />
      <g transform="skewX(-8)" fontWeight="900" textAnchor="middle">
        <text x="48" y="30" fontSize="25" fill="#fff" textLength="70" lengthAdjust="spacingAndGlyphs">同花顺</text>
        <text x="51" y="70" fontSize="29" fill="#2c2c2c" textLength="66" lengthAdjust="spacingAndGlyphs">速递</text>
      </g>
    </PlotSvg>
  );
}

/* ---------- page ---------- */

const GREEN = "#148f14";
const DARK = "#333";

const STATS = [
  ["高", "2014.59", 147, GREEN], ["开", "2011.75", 148, GREEN], ["量", "1.10亿", 119, DARK],
  ["低", "1972.17", 145, GREEN], ["换", "2.15%", 112, DARK], ["额", "1729.6亿", 165, DARK],
];
const TABS = [["分时", 83, 159], ["日K", 66, 139], ["周K", 69, 140], ["月K", 69, 140], ["五日", 80, 159]];

export default function App() {
  return (
    <Page>
      <GlobalStyle />
      <Header>
        <StatusBar>
          <StatusGroup>
            <Fit w={96} size={37} weight={500}>11:44</Fit>
            <AppIcons>
              <CardsIcon />
              <StockAppIcon />
              <ChatIcon />
              <ShieldIcon />
            </AppIcons>
          </StatusGroup>
          <StatusIcons />
        </StatusBar>
        <TitleBar>
          <svg width="36" height="64" viewBox="0 0 36 64">
            <path d="M34 2L3 32l31 30" fill="none" stroke="#fff" strokeWidth="4.500" />
          </svg>
          <svg width="24" height="36"><path d="M24 0v36L0 18z" fill="#fff" /></svg>
          <TitleBlock>
            <Fit w={187} size={46} weight={500}>创业板指</Fit>
            <CodeLine>
              <Fit w={130} size={42} weight={500}>399006</Fit>
              <LevelBadge>
                <Fit w={32} size={27}>L1</Fit>
              </LevelBadge>
            </CodeLine>
          </TitleBlock>
          <svg width="24" height="36"><path d="M0 0v36l24-18z" fill="#fff" /></svg>
          <RobotIcon />
          <svg width="62" height="62" viewBox="0 0 62 62" fill="none" stroke="#fff" strokeWidth="4.500">
            <circle cx="28.500" cy="30" r="26.500" />
            <path d="M47 48l11 11" />
          </svg>
        </TitleBar>
      </Header>

      <Quote>
        <PriceBlock>
          <Fit w={232} size={73} weight={700} color="#0a950a">1972.24</Fit>
          <Changes>
            <Fit w={103} size={37} weight={500} color={GREEN}>-56.12</Fit>
            <Fit w={113} size={37} weight={500} color={GREEN}>-2.77%</Fit>
          </Changes>
        </PriceBlock>
        <Stats>
          {STATS.map(([label, value, w, color]) => (
            <Stat key={label}>
              {label}
              <Fit w={w} size={45} weight={500} color={color}>{value}</Fit>
            </Stat>
          ))}
          <Corner />
        </Stats>
      </Quote>

      <EtfRow>
        <Fit w={133} size={36}>相关ETF</Fit>
        <Spacer $w={13} />
        <Help size={33} />
        <Spacer $w={105} />
        <Fit w={239} size={36}>创业板ETF广发</Fit>
        <Spacer $w={27} />
        <Fit w={62} size={36} weight={500} color={GREEN}>1.18</Fit>
        <Spacer $w={13} />
        <Fit w={113} size={36} weight={500} color={GREEN}>-2.72%</Fit>
        <Spacer $w={23} />
        <Fit w={202} size={36} color="#ee8c58">跟踪度:100%</Fit>
        <Spacer $w={18} />
        <svg width="20" height="34"><path d="M2 1l16 16L2 33" fill="none" stroke="#bbb" strokeWidth="2.500" /></svg>
      </EtfRow>
      <NewsRow>
        <BrandLogo />
        <Spacer $w={24} />
        <Fit w={780} size={42}>异动解读：互联网金融、AI硬件板块领跌...</Fit>
        <Dot />
        <svg width="24" height="24"><path d="M1 1l22 22M23 1L1 23" stroke="#888" strokeWidth="2.300" /></svg>
      </NewsRow>
      <Band />

      <Tabs>
        {TABS.map(([label, w, cell], k) => (
          <Tab key={label} $w={cell} $active={k === 1}>
            <Fit w={w} size={41} weight={k === 1 ? 700 : 400}>{label}</Fit>
          </Tab>
        ))}
        <Tab $w={84}><Fit w={84} size={41}>更多</Fit></Tab>
        <MoreArrow />
        <svg width="50" height="50" viewBox="0 0 50 50" fill="none" stroke="#999" strokeWidth="4">
          <path d="M14 4h22q1 0 2 1l9 18q1 2 0 4l-9 18q-1 1-2 1H14q-1 0-2-1L3 27q-1-2 0-4l9-18q1-1 2-1z" />
          <circle cx="25" cy="25" r="7" />
        </svg>
      </Tabs>
      <Periods>
        {["120分", "60分", "30分", "15分", "5分", "1分"].map((p) => (
          <Period key={p}>{p}</Period>
        ))}
      </Periods>

      <Legend>
        <Picker $w={114} $h={50} $pad={10} $m="42px 0 0 18px">
          <Fit w={64} size={32}>均线</Fit>
        </Picker>
        <LegendLines>
          <LegendLine>
            <Fit w={66} size={32}>日线</Fit>
            <Fit w={163} size={33} weight={500} color="#111">M5:2018.24</Fit>
            <Fit w={163} size={33} weight={500} color="#dba226">M8:2080.50</Fit>
            <Fit w={180} size={33} weight={500} color="#e0607a">M13:2128.18</Fit>
          </LegendLine>
          <LegendLine>
            <Fit w={180} size={33} weight={500} color="#6cb94f">M21:2168.46</Fit>
            <Fit w={179} size={33} weight={500} color="#3a77a2">M55:2213.32</Fit>
            <Fit w={179} size={33} weight={500} color="#4b1650">M89:2052.27</Fit>
          </LegendLine>
          <LegendLine>
            <Fit w={197} size={33} weight={500} color="#a84f42">M233:1864.57</Fit>
          </LegendLine>
        </LegendLines>
        <Adjust>
          <Fit w={99} size={33} color="#444">前复权</Fit>
        </Adjust>
      </Legend>
      <MainChart />
      <DateAxis />
      <TrendPanel />
      <EnePanel />

      <BottomNav>
        <NavItem>
          <svg width="52" height="52" viewBox="0 0 52 52">
            <rect x="3" y="3" width="46" height="46" rx="5" fill="none" stroke="#d83a40" strokeWidth="3" />
            <text x="26" y="36" fontSize="28" fontWeight="700" textAnchor="middle" fill="#e8323a">买</text>
          </svg>
          买指数
        </NavItem>
        <NavItem>
          <svg width="52" height="52" viewBox="0 0 52 52" fill="none" stroke="#dedede" strokeWidth="2.800">
            <path d="M3 3h46v46H3zM13 26h26" />
          </svg>
          删自选
        </NavItem>
        <NavItem>
          <svg width="52" height="52" viewBox="0 0 52 52" fill="none" stroke="#dedede" strokeWidth="2.800">
            <circle cx="26" cy="26" r="24" />
            <path d="M14 19h24M14 33h24" />
          </svg>
          功能
        </NavItem>
        <Smudge $x={884} $y={108} $w={184} $h={38} />
        <Smudge $x={1046} $y={116} $w={16} $h={10} $c="#1c1c1c" />
      </BottomNav>
    </Page>
  );
}
